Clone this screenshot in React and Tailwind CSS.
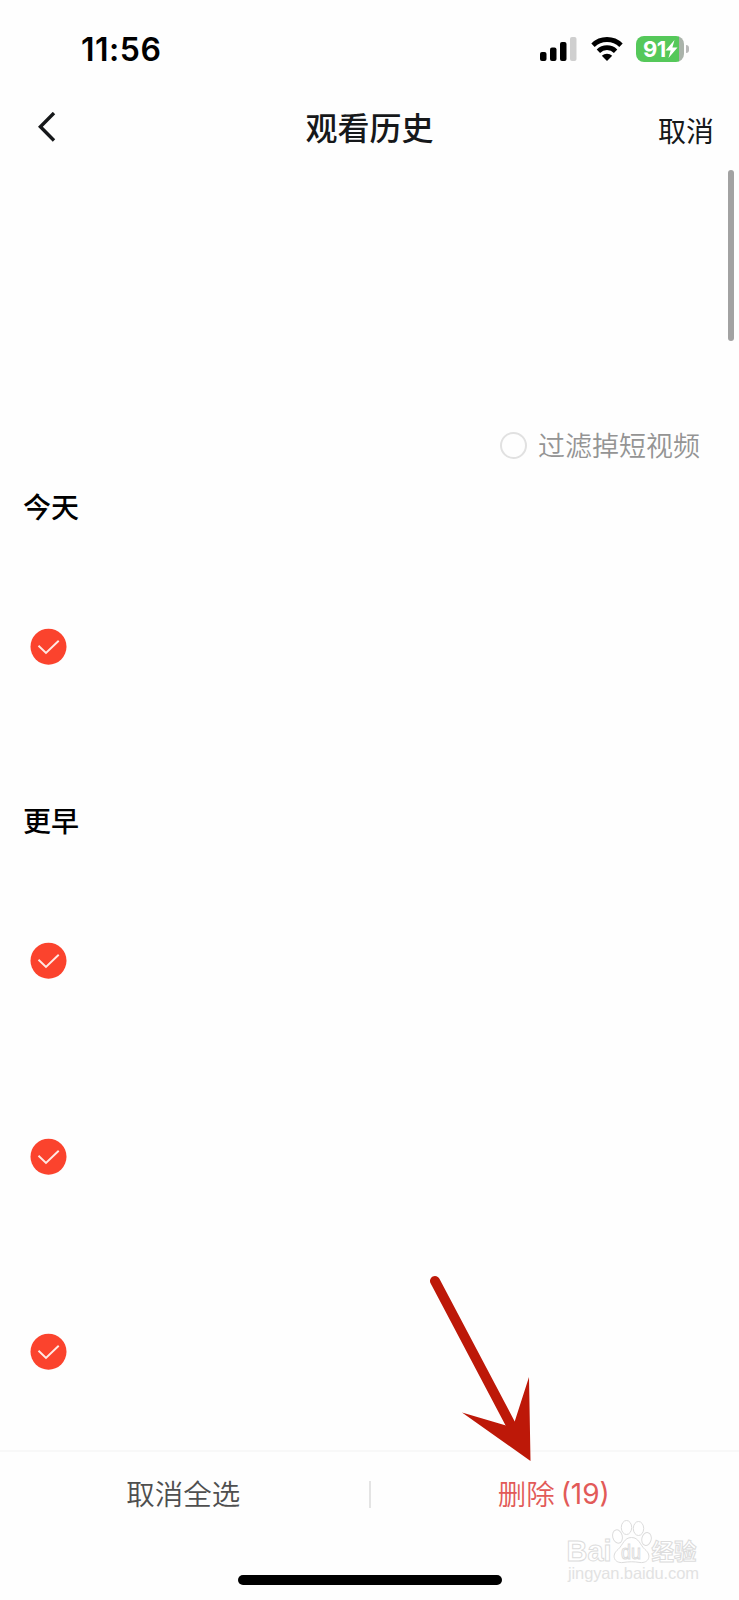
import React from "react";

const cjk = "font-['Noto_Sans_CJK_SC',sans-serif]";

function StatusBar() {
  return (
    <div className="flex h-24 shrink-0 items-center justify-between pl-[81px] pr-[50px] pt-[2px]">
      <span className="pt-px font-['Inter',sans-serif] text-[32px] leading-none font-semibold tracking-[0.5px] text-black">11:56</span>
      <div className="flex items-center">
        <svg className="mr-[14px]" width="38" height="26" viewBox="0 0 38 26">
          <rect x="1" y="16" width="6.5" height="9" rx="2" fill="#000" />
          <rect x="11" y="11.5" width="6.5" height="13.5" rx="2" fill="#000" />
          <rect x="21" y="6" width="6.5" height="19" rx="2" fill="#000" />
          <rect x="31" y="1" width="6.5" height="24" rx="2" fill="#cfcfcf" />
        </svg>
        <svg className="mr-[13px]" width="32" height="26" viewBox="0 0 32 26">
          <g fill="none" stroke="#000" strokeWidth="4.8">
            <path d="M2 9.2 A20 20 0 0 1 30 9.2" />
            <path d="M7.4 15.2 A12.3 12.3 0 0 1 24.6 15.2" />
          </g>
          <path d="M16 25 L10.8 19.8 A7.4 7.4 0 0 1 21.2 19.8 Z" fill="#000" />
        </svg>
        <div className="flex items-center gap-[2px]">
          <div className="flex h-[26px] w-[48px] items-center overflow-hidden rounded-[8px] bg-[linear-gradient(90deg,#55c85a_0_43px,#aab3aa_43px)] pl-[7px]">
            <span className="font-['Inter',sans-serif] text-[22px] leading-none font-bold tracking-[-0.5px] text-white">91</span>
            <svg width="13" height="20" viewBox="0 0 13 20" className="-ml-px shrink-0">
              <path d="M9.5 1 L0.5 11.6 H5.6 L3.5 19 L12.5 8.4 H7.400 Z" fill="#fff" />
            </svg>
          </div>
          <div className="h-[8px] w-[3px] rounded-r-full bg-[#b9b9b9]" />
        </div>
      </div>
    </div>
  );
}

function NavBar() {
  return (
    <div className="grid h-16 shrink-0 grid-cols-[1fr_auto_1fr] items-center px-[25px]">
      <svg className="ml-3" width="20" height="32" viewBox="0 0 20 32" fill="none" stroke="#16181a" strokeWidth="3.4">
        <path d="M17 1 L3.4 14.7 L17 28.5" />
      </svg>
      <h1 className="pb-[5px] text-[32px] leading-none font-medium text-[#16181a]">观看历史</h1>
      <button className="justify-self-end pt-[4px] text-[28px] leading-none font-normal text-[#16181a]">取消</button>
    </div>
  );
}

function CheckedRow() {
  return (
    <div className="flex h-[195.3px] items-center pl-[30px]">
      <svg width="37" height="37" viewBox="0 0 37 37">
        <circle cx="18.5" cy="18.7" r="18" fill="#fb432d" />
        <path d="M8.5 17.7 L16 25 L28.7 12.7" fill="none" stroke="#ffe9e4" strokeWidth="1.9" />
      </svg>
    </div>
  );
}

function Section({ title, count }) {
  return (
    <section>
      <h2 className="flex h-[84px] items-center pb-[2px] pl-[23px] text-[28px] leading-none font-medium text-black">{title}</h2>
      {Array.from({ length: count }, (_, i) => (
        <CheckedRow key={i} />
      ))}
    </section>
  );
}

function Watermark() {
  return (
    <svg className="absolute top-[1518px] left-[564px]" width="140" height="66" viewBox="0 0 140 66">
      <g fill="#fff" stroke="#dcdcdc" strokeWidth="1">
        <text x="2.5" y="43" fontFamily="Liberation Sans, sans-serif" fontWeight="bold" fontSize="30" textLength="45" lengthAdjust="spacingAndGlyphs">Bai</text>
        <ellipse cx="53.5" cy="18.5" rx="4.8" ry="6.8" transform="rotate(-14 53.5 18.5)" />
        <ellipse cx="62.5" cy="9.5" rx="5.2" ry="7" />
        <ellipse cx="74.5" cy="10.5" rx="5.2" ry="7" />
        <ellipse cx="82.5" cy="21" rx="4.7" ry="6.5" transform="rotate(14 82.5 21)" />
        <path d="M67.5 19.5 C60 19.5 59 27 54 31.500 C47 37 50 45.500 59 44.500 C65 43.500 70 43.500 76 44.500 C85 45.500 88 37 81 31.500 C76 27 75 19.500 67.500 19.500 Z" />
        <text x="57" y="41" fontFamily="Liberation Sans, sans-serif" fontSize="20" textLength="20" lengthAdjust="spacingAndGlyphs">du</text>
        <text x="87.500" y="42" fontFamily="Noto Sans CJK SC, sans-serif" fontWeight="bold" fontSize="22.500">经验</text>
      </g>
      <text x="4" y="61" fill="#e2e2e2" fontFamily="Liberation Sans, sans-serif" fontSize="16.500" textLength="131">jingyan.baidu.com</text>
    </svg>
  );
}

export default function App() {
  return (
    <main className={`relative flex h-[1600px] w-[739px] flex-col overflow-hidden bg-[#fefefe] ${cjk}`}>
      <StatusBar />
      <NavBar />
      <div className="relative h-[1290px] shrink-0">
        <div className="flex h-[305px] items-end justify-end pr-[39px] pb-[6px]">
          <label className="flex items-center gap-[11px]">
            <span className="size-[27px] rounded-full border-2 border-[#e1e1e1]" />
            <span className="-mt-[2px] text-[27px] leading-none font-[350] text-[#949494]">过滤掉短视频</span>
          </label>
        </div>
        <Section title="今天" count={1} />
        <div className="h-[35px]" />
        <Section title="更早" count={3} />
        <div className="absolute top-[10px] right-[5px] h-[171px] w-[6px] rounded-full bg-[#a2a2a2]" />
      </div>
      <footer className="flex h-[150px] flex-col border-t-2 border-[#f8f8f8]">
        <div className="flex h-[84px] items-center text-[28.5px] leading-none font-[350]">
          <button className="flex-1 pr-[2px] pb-[2px] text-[#4f4f4f]">取消全选</button>
          <span className="h-[27px] w-[2px] bg-[#e4e4e4]" />
          <button className="flex flex-1 items-center justify-center gap-[6px] pr-[2px] pb-[2px] text-[#e25a58]">
            <span>删除</span>
            <span className="pt-[2px] font-['Inter',sans-serif] text-[28px] font-normal">(19)</span>
          </button>
        </div>
        <div className="mt-[39px] ml-[238px] h-[10px] w-[264px] rounded-full bg-black" />
      </footer>
      <svg className="absolute top-[1270px] left-[420px]" width="120" height="200" viewBox="0 0 120 200">
        <path d="M15 11 L92 157" stroke="#bd1808" strokeWidth="10" strokeLinecap="round" />
        <path d="M110.5 191 L42 142.5 L86 155.5 L94.7 151.5 L109 107 Z" fill="#bd1808" />
      </svg>
      <Watermark />
    </main>
  );
}
